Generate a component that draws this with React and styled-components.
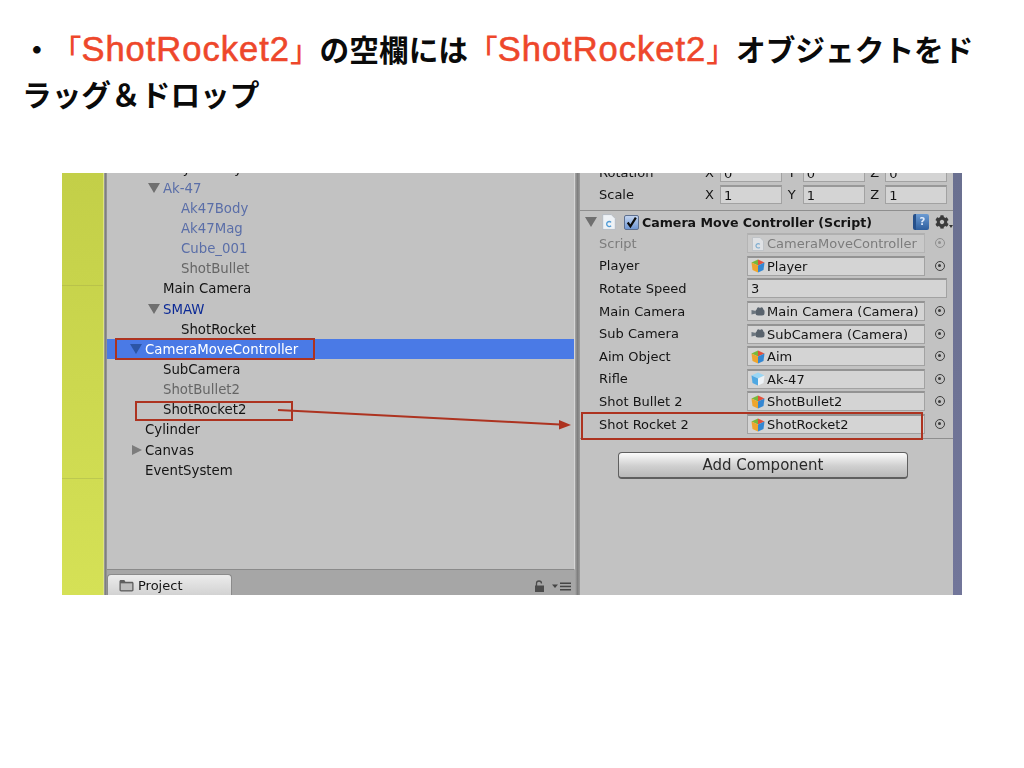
import React from "react";
import styled, { createGlobalStyle } from "styled-components";
import { FaCog } from "react-icons/fa";

const GlobalStyle = createGlobalStyle`
  html, body {
    margin: 0;
    background: #fff;
  }
`;

const Slide = styled.div`
  width: 1024px;
  height: 768px;
  overflow: hidden;
  background: #fff;
`;

const Title = styled.h1`
  margin: 0;
  padding: 26px 0 0 22px;
  width: 970px;
  height: 90px;
  font-family: "Noto Sans CJK JP", sans-serif;
  font-size: 29.7px;
  font-weight: 700;
  line-height: 45px;
  color: #0a0a0a;
  text-spacing-trim: space-all;
`;

const Accent = styled.span`
  color: #ee472b;
  font-weight: 500;
  line-height: 0;
`;

const AccentLatin = styled.span`
  font-family: "Liberation Sans", sans-serif;
  font-weight: 400;
  font-size: 34.5px;
  letter-spacing: 1px;
  line-height: 0;
  -webkit-text-stroke: 0.6px #ee472b;
`;

const Shot = styled.div`
  position: relative;
  display: flex;
  width: 900px;
  height: 422px;
  margin: 57px 0 0 62px;
  overflow: hidden;
  font-family: "DejaVu Sans", sans-serif;
  font-size: 13px;
  color: #141414;
  background: #c2c2c2;
  filter: blur(0.3px);
`;

const Scene = styled.div`
  flex: 0 0 41px;
  background:
    linear-gradient(#c9d24f00 112px, #b9c24a 112px, #b9c24a 113px, #c9d24f00 113px),
    linear-gradient(#c9d24f00 305px, #bcc850 305px, #bcc850 306px, #c9d24f00 306px),
    linear-gradient(#c3cf48, #d5e156);
  border-right: 1px solid #dde47e;
`;

const Splitter = styled.div`
  flex: 0 0 ${(p) => p.$w}px;
  background: linear-gradient(90deg, #a6a6a6, #7f7f7f 50%, #9a9a9a);
`;

const HierarchyColumn = styled.div`
  flex: 0 0 468px;
  display: flex;
  flex-direction: column;
  min-width: 0;
`;

const Tree = styled.div`
  height: 397px;
  overflow: hidden;
  background: #c2c2c2;
  border-bottom: 1px solid #8a8a8a;
  border-right: 1px solid #d6d6d6;
  box-sizing: border-box;
  font-size: 13.3px;
`;

const TreeList = styled.div`
  margin-top: -15px;
`;

const TreeRow = styled.div`
  display: flex;
  align-items: center;
  height: 20.15px;
  padding-left: ${(p) => p.$depth * 18 + 2}px;
  background: ${(p) => (p.$selected ? "#4a7ae6" : "transparent")};
  color: ${(p) => p.$color || "#141414"};
  white-space: nowrap;
`;

const CaretSlot = styled.span`
  flex: 0 0 18px;
  display: flex;
  justify-content: flex-end;
  padding-right: 3px;
  box-sizing: border-box;
`;

const CaretDown = styled.span`
  width: 0;
  height: 0;
  border-left: 6px solid transparent;
  border-right: 6px solid transparent;
  border-top: 10px solid ${(p) => p.$color || "#6f6f6f"};
`;

const CaretRight = styled.span`
  width: 0;
  height: 0;
  border-top: 5.5px solid transparent;
  border-bottom: 5.5px solid transparent;
  border-left: 10px solid #7c7c7c;
`;

const TabBar = styled.div`
  flex: 1;
  display: flex;
  align-items: flex-end;
  justify-content: space-between;
  background: #a6a6a6;
`;

const Tab = styled.div`
  display: flex;
  align-items: center;
  gap: 3px;
  width: 125px;
  height: 21px;
  padding-left: 10px;
  box-sizing: border-box;
  border: 1px solid #8b8b8b;
  border-bottom: none;
  border-radius: 4px 4px 0 0;
  background: linear-gradient(#ececec, #d2d2d2);
`;

const TabTools = styled.div`
  display: flex;
  align-items: center;
  gap: 7px;
  padding: 0 4px 3px 0;
`;

const Inspector = styled.div`
  flex: 0 0 373px;
  display: flex;
  flex-direction: column;
  min-width: 0;
  background: #c2c2c2;
`;

const TransformBlock = styled.div`
  flex: 0 0 38px;
  display: flex;
  flex-direction: column;
  justify-content: flex-end;
  overflow: hidden;
  padding-bottom: 5px;
  box-sizing: border-box;
  border-bottom: 1px solid #8e8e8e;
`;

const TransformRow = styled.div`
  flex: 0 0 22px;
  display: flex;
  align-items: center;
  padding-left: 19px;
`;

const TransformLabel = styled.span`
  flex: 0 0 106px;
`;

const AxisGroup = styled.div`
  display: flex;
  align-items: center;
  gap: 5px;
  width: 83px;
`;

const Axis = styled.span`
  flex: 0 0 10px;
`;

const AxisField = styled.div`
  flex: 0 0 62px;
  height: 19px;
  line-height: 17px;
  padding-left: 3px;
  box-sizing: border-box;
  background: #d4d4d4;
  border: 1px solid #a2a2a2;
  border-top: 2px solid #989898;
`;

const ComponentHeader = styled.div`
  flex: 0 0 21px;
  display: flex;
  align-items: center;
  padding: 1px 0 0 5px;
  box-sizing: border-box;
`;

const HeaderIcon = styled.span`
  display: flex;
  margin-left: 4px;
`;

const HeaderTitle = styled.span`
  margin-left: 3px;
  flex: 0 0 271px;
  font-size: 12.6px;
  font-weight: 700;
  white-space: nowrap;
`;

const CheckBox = styled.span`
  display: flex;
  align-items: center;
  justify-content: center;
  width: 15px;
  height: 15px;
  margin-left: 7px;
  box-sizing: border-box;
  border: 1px solid #5d6f8f;
  border-radius: 2px;
  background: linear-gradient(#c3d4ef, #6f97d4);
`;

const HelpBook = styled.span`
  width: 16px;
  height: 16px;
  box-sizing: border-box;
  border-radius: 2px;
  border-left: 3px solid #26508a;
  background: linear-gradient(#6b9bd3, #2d5e9e);
  color: #dfeafa;
  font-size: 10px;
  font-weight: 700;
  line-height: 16px;
  text-align: center;
`;

const GearWrap = styled.span`
  display: flex;
  align-items: flex-end;
  margin-left: 6px;
  color: #3a3a3a;
`;

const GearCaret = styled.span`
  width: 0;
  height: 0;
  margin: 0 0 1px 0;
  border-left: 2.5px solid transparent;
  border-right: 2.5px solid transparent;
  border-top: 3px solid #333;
`;

const PropRow = styled.div`
  flex: 0 0 22.6px;
  display: flex;
  align-items: center;
  padding-left: 19px;
  color: ${(p) => (p.$dim ? "#7c7c7c" : "#141414")};
`;

const PropLabel = styled.span`
  flex: 0 0 148px;
  white-space: nowrap;
`;

const PropField = styled.div`
  flex: 0 0 ${(p) => (p.$wide ? 200 : 178)}px;
  display: flex;
  align-items: center;
  gap: 2px;
  height: 20px;
  padding-left: 3px;
  box-sizing: border-box;
  overflow: hidden;
  white-space: nowrap;
  background: ${(p) => (p.$dim ? "#c9c9c9" : "#d4d4d4")};
  border: 1px solid ${(p) => (p.$dim ? "#b4b4b4" : "#a2a2a2")};
  border-top: 2px solid ${(p) => (p.$dim ? "#b0b0b0" : "#939393")};
`;

const Target = styled.span`
  position: relative;
  flex: 0 0 10px;
  height: 10px;
  margin-left: 10px;
  box-sizing: border-box;
  border: 1.3px solid ${(p) => (p.$dim ? "#8f8f8f" : "#3c3c3c")};
  border-radius: 50%;

  &::after {
    content: "";
    position: absolute;
    left: 2.2px;
    top: 2.2px;
    width: 3px;
    height: 3px;
    border-radius: 50%;
    background: ${(p) => (p.$dim ? "#8f8f8f" : "#3c3c3c")};
  }
`;

const PropList = styled.div`
  display: flex;
  flex-direction: column;
  padding-bottom: 3px;
  border-bottom: 1px solid #8e8e8e;
`;

const AddButton = styled.div`
  width: 290px;
  height: 27px;
  margin: 13px 0 0 38px;
  line-height: 25px;
  text-align: center;
  font-size: 15px;
  color: #2a2a2a;
  box-sizing: border-box;
  border: 1px solid #5f5f5f;
  border-bottom-width: 2px;
  border-radius: 4px;
  background: linear-gradient(#fbfbfb, #cfcfcf 55%, #b9b9b9);
`;

const EdgeStrip = styled.div`
  flex: 1;
  background: linear-gradient(#6a7090, #72769a);
`;

const RedBox = styled.div`
  position: absolute;
  left: ${(p) => p.$x}px;
  top: ${(p) => p.$y}px;
  width: ${(p) => p.$w}px;
  height: ${(p) => p.$h}px;
  box-sizing: border-box;
  border: 2px solid #ad3320;
`;

const ArrowLayer = styled.svg`
  position: absolute;
  left: 0;
  top: 0;
`;

const Cube = () => (
  <svg width="14" height="14" viewBox="0 0 14 14">
    <polygon points="0.5,3.500 7,0.500 7,6.500" fill="#78b83a" />
    <polygon points="7,0.500 13.500,3.500 7,6.500" fill="#e4503a" />
    <polygon points="0.500,3.500 7,6.500 7,13.500 1.500,11" fill="#eea52e" />
    <polygon points="7,6.500 13.500,3.500 12.500,11 7,13.500" fill="#3487d2" />
  </svg>
);

const PrefabCube = () => (
  <svg width="14" height="14" viewBox="0 0 14 14">
    <polygon points="0.500,3.500 7,0.500 13.500,3.500 7,6.500" fill="#9ad6f4" />
    <polygon points="0.500,3.500 7,6.500 7,13.500 1.500,11" fill="#4fa8e2" />
    <polygon points="7,6.500 13.500,3.500 12.500,11 7,13.500" fill="#eef3f7" />
  </svg>
);

const CameraIcon = () => (
  <svg width="14" height="14" viewBox="0 0 14 14">
    <rect x="4.500" y="4" width="9" height="6.500" rx="2.500" fill="#59636d" />
    <polygon points="0.500,5 5,6 5,8.500 0.500,9.500" fill="#6d7780" />
    <circle cx="7.500" cy="3.800" r="1.600" fill="#59636d" />
    <circle cx="10.500" cy="3.800" r="1.600" fill="#59636d" />
  </svg>
);

const ScriptIcon = ({ size = 14, faded }) => (
  <svg width={size} height={size} viewBox="0 0 14 14" opacity={faded ? 0.6 : 1}>
    <path d="M1.500 0.500h7.500l3.500 3.500v9.500h-11z" fill="#eef2f6" stroke="#aeb6bf" strokeWidth="0.7" />
    <path d="M8.800 7.300a2.200 2.200 0 1 0 0 3" fill="none" stroke="#4f9bd6" strokeWidth="1.200" />
  </svg>
);

const FolderIcon = () => (
  <svg width="17" height="13" viewBox="0 0 15 12">
    <path d="M1 2.500c0-1 .5-1.500 1.500-1.500h3l1 1.500h6c1 0 1.500.5 1.500 1.500v6c0 1-.5 1.500-1.500 1.500h-10C1.500 11.500 1 11 1 10z" fill="#5f5f5f" />
    <rect x="2.200" y="4" width="10.600" height="6.300" fill="#bdbdbd" />
  </svg>
);

const LockIcon = () => (
  <svg width="11" height="12" viewBox="0 0 11 12">
    <path d="M2.500 6V3.500a2.500 2.500 0 0 1 5 0" fill="none" stroke="#4c4c4c" strokeWidth="1.300" />
    <rect x="1" y="5.500" width="9" height="6.500" fill="#4c4c4c" />
  </svg>
);

const MenuIcon = () => (
  <svg width="19" height="9" viewBox="0 0 19 9">
    <polygon points="0,2.500 6,2.500 3,6" fill="#454545" />
    <rect x="8" y="0.500" width="11" height="1.500" fill="#454545" />
    <rect x="8" y="3.700" width="11" height="1.500" fill="#454545" />
    <rect x="8" y="7" width="11" height="1.500" fill="#454545" />
  </svg>
);

const treeRows = [
  { label: "Player Body", depth: 2 },
  { label: "Ak-47", depth: 2, color: "#5a6ea8", caret: "down" },
  { label: "Ak47Body", depth: 3, color: "#5a6ea8" },
  { label: "Ak47Mag", depth: 3, color: "#5a6ea8" },
  { label: "Cube_001", depth: 3, color: "#5a6ea8" },
  { label: "ShotBullet", depth: 3, color: "#666" },
  { label: "Main Camera", depth: 2 },
  { label: "SMAW", depth: 2, color: "#0c2a96", caret: "down" },
  { label: "ShotRocket", depth: 3 },
  { label: "CameraMoveController", depth: 1, color: "#fff", caret: "down", caretColor: "#2c55a6", selected: true },
  { label: "SubCamera", depth: 2 },
  { label: "ShotBullet2", depth: 2, color: "#666" },
  { label: "ShotRocket2", depth: 2 },
  { label: "Cylinder", depth: 1 },
  { label: "Canvas", depth: 1, caret: "right" },
  { label: "EventSystem", depth: 1 },
];

const propRows = [
  { label: "Script", value: "CameraMoveController", icon: <ScriptIcon faded />, dim: true },
  { label: "Player", value: "Player", icon: <Cube /> },
  { label: "Rotate Speed", value: "3", wide: true },
  { label: "Main Camera", value: "Main Camera (Camera)", icon: <CameraIcon /> },
  { label: "Sub Camera", value: "SubCamera (Camera)", icon: <CameraIcon /> },
  { label: "Aim Object", value: "Aim", icon: <Cube /> },
  { label: "Rifle", value: "Ak-47", icon: <PrefabCube /> },
  { label: "Shot Bullet 2", value: "ShotBullet2", icon: <Cube /> },
  { label: "Shot Rocket 2", value: "ShotRocket2", icon: <Cube /> },
];

const transformRows = [
  { label: "Rotation", values: ["0", "0", "0"] },
  { label: "Scale", values: ["1", "1", "1"] },
];

export default function App() {
  return (
    <Slide>
      <GlobalStyle />
      <Title>
        ・<Accent>「<AccentLatin>ShotRocket2</AccentLatin>」</Accent>の空欄には<Accent>「<AccentLatin>ShotRocket2</AccentLatin>」</Accent>オブジェクトをドラッグ＆ドロップ
      </Title>
      <Shot>
        <Scene />
        <Splitter $w={3} />
        <HierarchyColumn>
          <Tree>
            <TreeList>
              {treeRows.map((row) => (
                <TreeRow key={row.label} $depth={row.depth} $color={row.color} $selected={row.selected}>
                  <CaretSlot>
                    {row.caret === "down" && <CaretDown $color={row.caretColor} />}
                    {row.caret === "right" && <CaretRight />}
                  </CaretSlot>
                  {row.label}
                </TreeRow>
              ))}
            </TreeList>
          </Tree>
          <TabBar>
            <Tab>
              <FolderIcon />
              Project
            </Tab>
            <TabTools>
              <LockIcon />
              <MenuIcon />
            </TabTools>
          </TabBar>
        </HierarchyColumn>
        <Splitter $w={5} />
        <Inspector>
          <TransformBlock>
            {transformRows.map((row) => (
              <TransformRow key={row.label}>
                <TransformLabel>{row.label}</TransformLabel>
                {["X", "Y", "Z"].map((axis, i) => (
                  <AxisGroup key={axis}>
                    <Axis>{axis}</Axis>
                    <AxisField>{row.values[i]}</AxisField>
                  </AxisGroup>
                ))}
              </TransformRow>
            ))}
          </TransformBlock>
          <ComponentHeader>
            <CaretDown />
            <HeaderIcon>
              <ScriptIcon size={16} />
            </HeaderIcon>
            <CheckBox>
              <svg width="13" height="13" viewBox="0 0 12 12">
                <path d="M2.500 6l2.500 3.500L10 1.500" fill="none" stroke="#0c0c0c" strokeWidth="2" />
              </svg>
            </CheckBox>
            <HeaderTitle>Camera Move Controller (Script)</HeaderTitle>
            <HelpBook>?</HelpBook>
            <GearWrap>
              <FaCog size={14} />
              <GearCaret />
            </GearWrap>
          </ComponentHeader>
          <PropList>
            {propRows.map((row) => (
              <PropRow key={row.label} $dim={row.dim}>
                <PropLabel>{row.label}</PropLabel>
                <PropField $dim={row.dim} $wide={row.wide}>
                  {row.icon}
                  {row.value}
                </PropField>
                {!row.wide && <Target $dim={row.dim} />}
              </PropRow>
            ))}
          </PropList>
          <AddButton>Add Component</AddButton>
        </Inspector>
        <EdgeStrip />

        <RedBox $x={53} $y={165} $w={200} $h={22} />
        <RedBox $x={73} $y={228} $w={158} $h={20} />
        <RedBox $x={519} $y={239} $w={342} $h={28} />
        <ArrowLayer width="900" height="422" viewBox="0 0 900 422">
          <line x1="216" y1="237" x2="498" y2="251.500" stroke="#ad3320" strokeWidth="2" />
          <polygon points="509,252 497,247 497,256.500" fill="#ad3320" />
        </ArrowLayer>
      </Shot>
    </Slide>
  );
}
